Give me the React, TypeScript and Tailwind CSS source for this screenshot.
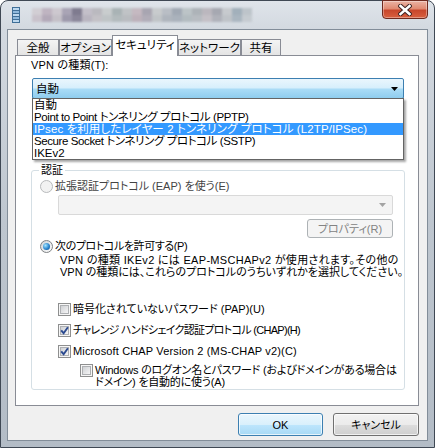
import React from 'react';

const ui =
  "font-['Liberation_Sans','Noto_Sans_CJK_JP',sans-serif] text-[11px] leading-[14px] text-black whitespace-nowrap [font-feature-settings:'palt']";

const mosaic = [
  ['#d2ced4', '#c9c2cb'],
  ['#bfb4c1', '#b3a9b8'],
  ['#cdc8cf', '#c4c0c7'],
  ['#a9a4b5', '#9d99ab'],
  ['#7f7b8f', '#8b879a'],
  ['#c3bfc9', '#b9b5c0'],
  ['#bab9bf', '#c3c1c6'],
  ['#c9cdce', '#bfc4c6'],
  ['#a9b3b5', '#b3bbbd'],
  ['#c0c3c6', '#b9bcc0'],
  ['#c5b9c1', '#bdb1ba'],
  ['#a8a5b1', '#b1adb8'],
  ['#c8cbcd', '#c0c4c7'],
  ['#b9bec5', '#afb5bd'],
  ['#a1a9b4', '#aab2bc'],
  ['#bcc4c7', '#b3bcc0'],
  ['#adb3b8', '#b7bcc1'],
  ['#bbb7be', '#c4c0c6'],
  ['#a6a8b1', '#b0b2ba'],
  ['#c7cace', '#bfc3c8'],
  ['#a2b0bb', '#aab6c0'],
  ['#bdc4ca', '#c5cbd0'],
];

// [label, tracking class]
const protocols: [string, string][] = [
  ['自動', ''],
  ['Point to Point トンネリング プロトコル (PPTP)', 'tracking-[-0.4px]'],
  ['IPsec を利用したレイヤー 2 トンネリング プロトコル (L2TP/IPSec)', 'tracking-[0.1px]'],
  ['Secure Socket トンネリング プロトコル (SSTP)', 'tracking-[-0.4px]'],
  ['IKEv2', ''],
];

function Check({ checked }: { checked?: boolean }) {
  return (
    <span className="relative flex h-[13px] w-[13px] shrink-0 items-center justify-center border border-[#8e8f8f] bg-[#f6f6f6]">
      <span className="h-[9px] w-[9px] border border-[#aeb0b3] bg-[linear-gradient(135deg,#cfd1d4,#f5f5f6)]" />
      {checked && (
        <svg className="absolute left-[1px] top-[1px]" width="9" height="9" viewBox="0 0 9 9">
          <path d="M1.2 4.4 L3.6 7.2 L7.9 1.2" fill="none" stroke="#2b4a90" strokeWidth="1.9" />
        </svg>
      )}
    </span>
  );
}

function Radio({ checked, disabled }: { checked?: boolean; disabled?: boolean }) {
  return (
    <span
      className={
        disabled
          ? 'flex h-[13px] w-[13px] shrink-0 items-center justify-center rounded-full border border-[#b8babc] bg-[#f2f2f2]'
          : 'flex h-[13px] w-[13px] shrink-0 items-center justify-center rounded-full border border-[#7e8184] bg-[linear-gradient(135deg,#cfd2d5,#ffffff)]'
      }
    >
      {checked && (
        <span className="h-[7px] w-[7px] rounded-full bg-[radial-gradient(circle_at_35%_35%,#a6e6ff,#2a86cf_55%,#0d3f7c)]" />
      )}
    </span>
  );
}

export default function App() {
  return (
    <div className={`h-[448px] w-[435px] overflow-hidden bg-white ${ui}`}>
      <div className="flex h-[448px] w-[435px] flex-col rounded-t-[8px] border border-[#3f4854] bg-[linear-gradient(180deg,#dfe4ea_0px,#d3d9e0_28px,#bec6cf_220px,#b3bcc6_448px)]">
        {/* Title bar */}
        <div className="relative flex h-[28px] shrink-0 items-center pl-[11px]">
          <svg width="8" height="16" viewBox="0 0 8 16" className="shrink-0">
            <rect x="0" y="0" width="8" height="16" fill="#3f6f98" />
            <rect x="1" y="1" width="6" height="2" fill="#bcd7ee" />
            <rect x="1" y="4" width="6" height="2" fill="#8fb9dd" />
            <rect x="1" y="7" width="6" height="2" fill="#bcd7ee" />
            <rect x="1" y="10" width="6" height="2" fill="#8fb9dd" />
            <rect x="1" y="13" width="6" height="2" fill="#bcd7ee" />
          </svg>
          <div className="ml-[12px] flex blur-[1px]">
            {mosaic.map((c, i) => (
              <div key={i} className="flex flex-col">
                <div className="h-[7px] w-[10px]" style={{ backgroundColor: c[0] }} />
                <div className="h-[7px] w-[10px]" style={{ backgroundColor: c[1] }} />
              </div>
            ))}
          </div>
          {/* close button */}
          <div className="absolute right-[6px] top-[-1px] flex h-[19px] w-[46px] items-center justify-center rounded-b-[4px] border border-[#6e2a1f] bg-[linear-gradient(180deg,#eab3a4_0%,#e08a72_45%,#c8472c_55%,#d9603f_100%)] shadow-[inset_0_0_0_1px_rgba(255,255,255,0.35)]">
            <svg width="14" height="12" viewBox="0 0 14 12">
              <path d="M2.5 2 L11.5 10 M11.5 2 L2.5 10" stroke="#3b2020" strokeWidth="4.4" strokeLinecap="square" />
              <path d="M2.5 2 L11.5 10 M11.5 2 L2.5 10" stroke="#ffffff" strokeWidth="2.6" strokeLinecap="square" />
            </svg>
          </div>
        </div>

        {/* Client area */}
        <div className="mx-[6px] h-[412px] shrink-0 border border-[#828d99] bg-[#f0f0f0] pl-[7px] pr-[8px]">
          {/* Tabs */}
          <div className="flex h-[25px] items-end pl-[2px] text-[11.5px]">
            <div className="flex h-[16px] w-[42px] items-center justify-center border border-b-0 border-[#898c95] bg-[linear-gradient(180deg,#f4f4f4,#e4e4e4)]">全般</div>
            <div className="flex h-[16px] w-[53px] items-center justify-center border border-b-0 border-[#898c95] bg-[linear-gradient(180deg,#f4f4f4,#e4e4e4)]">オプション</div>
            <div className="relative z-10 -mb-px flex h-[21px] w-[66px] items-start justify-center border border-b-0 border-[#898c95] bg-white pt-[2px]">セキュリティ</div>
            <div className="flex h-[16px] w-[63px] items-center justify-center border border-b-0 border-[#898c95] bg-[linear-gradient(180deg,#f4f4f4,#e4e4e4)]">ネットワーク</div>
            <div className="flex h-[16px] w-[40px] items-center justify-center border border-b-0 border-[#898c95] bg-[linear-gradient(180deg,#f4f4f4,#e4e4e4)]">共有</div>
          </div>

          {/* Panel */}
          <div className="relative h-[351px] border border-[#898c95] bg-white px-[15px] pt-[2px]">
            <div className="tracking-[0.2px]">VPN の種類(T):</div>
            <div className="ml-[1px] mt-[6px] flex h-[21px] w-[372px] items-center justify-between rounded-[2px] border border-[#3c7fb1] bg-[linear-gradient(180deg,#eaf6fd_0%,#d7effc_45%,#a9dbf6_55%,#8fcdee_100%)] pl-[3px] pr-[5px] text-[11.5px]">
              <span>自動</span>
              <svg width="7" height="4" viewBox="0 0 7 4">
                <path d="M0 0 H7 L3.5 4 Z" fill="#000" />
              </svg>
            </div>

            {/* Authentication group */}
            <div className="relative mt-[71px] h-[220px] w-[374px] rounded-[3px] border border-[#d5dfe5] pl-[8px] pt-[8px]">
              <span className="absolute left-[7px] top-[-8px] bg-white px-[2px]">認証</span>
              <div className="flex h-[14px] items-center gap-[2px] text-[#444444]">
                <Radio disabled />
                <span>拡張認証プロトコル (EAP) を使う(E)</span>
              </div>
              <div className="ml-[18px] mt-[2px] flex h-[20px] w-[335px] items-center justify-end rounded-[2px] border border-[#d9d9d9] bg-[#f4f4f4] pr-[6px]">
                <svg width="7" height="4" viewBox="0 0 7 4">
                  <path d="M0 0 H7 L3.5 4 Z" fill="#a3a3a3" />
                </svg>
              </div>
              <div className="ml-[267px] mt-[4px] flex h-[19px] w-[86px] items-center justify-center rounded-[3px] border border-[#adb2b5] bg-[#f4f4f4] text-[#838383]">
                プロパティ(R)
              </div>
              <div className="mt-[1px] flex h-[14px] items-center gap-[2px]">
                <Radio checked />
                <span className="tracking-[-0.4px]">次のプロトコルを許可する(P)</span>
              </div>
              <div className="ml-[20px] mt-[1px] leading-[12px]">
                <div className="tracking-[0.3px]">VPN の種類 IKEv2 には EAP-MSCHAPv2 が使用されます。その他の</div>
                <div>VPN の種類には、これらのプロトコルのうちいずれかを選択してください。</div>
              </div>
              <div className="ml-[18px] mt-[24px] flex h-[14px] items-center gap-[2px]">
                <Check />
                <span>暗号化されていないパスワード (PAP)(U)</span>
              </div>
              <div className="ml-[18px] mt-[7px] flex h-[14px] items-center gap-[2px]">
                <Check checked />
                <span className="tracking-[-0.7px]">チャレンジ ハンドシェイク認証プロトコル (CHAP)(H)</span>
              </div>
              <div className="ml-[18px] mt-[7px] flex h-[14px] items-center gap-[2px]">
                <Check checked />
                <span className="tracking-[0.15px]">Microsoft CHAP Version 2 (MS-CHAP v2)(C)</span>
              </div>
              <div className="ml-[40px] mt-[6px] flex items-start gap-[2px]">
                <Check />
                <div className="leading-[12px] tracking-[-0.2px]">
                  <div>Windows のログオン名とパスワード (およびドメインがある場合は</div>
                  <div>ドメイン) を自動的に使う(A)</div>
                </div>
              </div>
            </div>

            {/* Open dropdown list */}
            <div className="absolute left-[16px] top-[42px] z-20 w-[372px] border border-[#646464] bg-white text-[11.5px] shadow-[2px_2px_2px_rgba(0,0,0,0.35)]">
              {protocols.map(([p, tr], i) => (
                <div
                  key={p}
                  className={
                    i === 2
                      ? `h-[12px] bg-[#3399ff] pl-[1px] leading-[12px] text-white ${tr}`
                      : `h-[12px] pl-[1px] leading-[12px] ${tr}`
                  }
                >
                  {p}
                </div>
              ))}
            </div>
          </div>

          {/* Buttons */}
          <div className="mt-[7px] flex justify-end gap-[10px]">
            <div className="flex h-[23px] w-[85px] items-center justify-center rounded-[3px] border border-[#3c7fb1] bg-[linear-gradient(180deg,#eaf6fd_0%,#d9f0fc_50%,#bee6fd_50%,#a7d9f5_100%)] shadow-[inset_0_0_0_1px_rgba(255,255,255,0.7)]">
              OK
            </div>
            <div className="flex h-[23px] w-[86px] items-center justify-center rounded-[3px] border border-[#707070] bg-[linear-gradient(180deg,#f2f2f2_0%,#ebebeb_50%,#dddddd_50%,#cfcfcf_100%)] shadow-[inset_0_0_0_1px_rgba(255,255,255,0.7)]">
              キャンセル
            </div>
          </div>
        </div>
      </div>
    </div>
  );
}
